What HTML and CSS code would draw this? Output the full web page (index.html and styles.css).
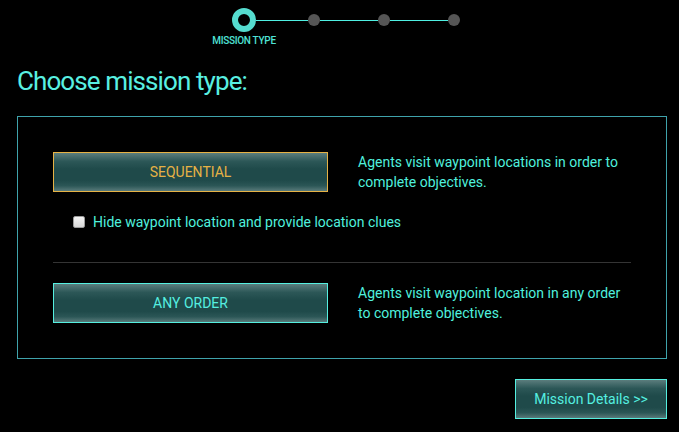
FILE: index.html
```html
<!DOCTYPE html>
<html lang="en">
<head>
<meta charset="utf-8">
<title>Choose mission type</title>
<link rel="stylesheet" href="styles.css">
</head>
<body>
<div class="page">
  <div class="stepper">
    <div class="step step-active">
      <span class="step-label">MISSION TYPE</span>
    </div>
    <div class="connector connector-first"></div>
    <div class="step step-dot"></div>
    <div class="connector"></div>
    <div class="step step-dot"></div>
    <div class="connector"></div>
    <div class="step step-dot"></div>
  </div>

  <h1 class="title">Choose mission type:</h1>

  <div class="panel">
    <div class="option">
      <button class="type-btn type-btn-selected">SEQUENTIAL</button>
      <p class="desc">Agents visit waypoint locations in order to<br>complete objectives.</p>
    </div>
    <label class="check-row">
      <span class="checkbox"></span>
      <span class="check-text">Hide waypoint location and provide location clues</span>
    </label>
    <div class="separator"></div>
    <div class="option">
      <button class="type-btn">ANY ORDER</button>
      <p class="desc">Agents visit waypoint location in any order<br>to complete objectives.</p>
    </div>
  </div>

  <div class="actions">
    <button class="type-btn next-btn">Mission Details &gt;&gt;</button>
  </div>
</div>
</body>
</html>
```

FILE: styles.css
```css
html, body {
  margin: 0;
  padding: 0;
  background: #000;
}

body {
  font-family: Roboto, "Liberation Sans", sans-serif;
  color: #59f0e2;
  width: 679px;
  height: 432px;
  overflow: hidden;
}

.page {
  padding: 0 12px 0 17px;
}

.stepper {
  display: flex;
  align-items: flex-start;
  padding-top: 8px;
  margin-left: 215px;
  height: 24px;
}

.step {
  position: relative;
  box-sizing: border-box;
  border-radius: 50%;
  flex: none;
}

.step-active {
  width: 24px;
  height: 24px;
  border: 6px solid #55dccf;
}

.step-dot {
  width: 12px;
  height: 12px;
  margin-top: 6px;
  background: #555555;
}

.connector {
  width: 58px;
  height: 1px;
  margin-top: 12px;
  background: #4ff0e2;
}

.connector-first {
  width: 52px;
}

.step-label {
  position: absolute;
  top: 21px;
  left: 50%;
  transform: translateX(-50%);
  white-space: nowrap;
  font-size: 10px;
  font-weight: 500;
  letter-spacing: -0.3px;
  color: #4fe3d6;
}

.title {
  margin: 34px 0 0 0;
  font-size: 26px;
  line-height: 30px;
  font-weight: 400;
  letter-spacing: -0.9px;
  color: #59f0e2;
}

.panel {
  margin-top: 20px;
  border: 1px solid #3fa3ab;
  padding: 35px 35px 35px 35px;
}

.option {
  display: flex;
  align-items: flex-start;
  gap: 30px;
}

.type-btn {
  box-sizing: border-box;
  width: 275px;
  height: 40px;
  flex: none;
  border: 1px solid #55efe0;
  background: linear-gradient(to bottom, #5b7d7d 0%, #2c5757 22%, #1f4a4a 42%, #1f4a4a 72%, #2b5656 86%, #587a7a 100%);
  color: #55efe0;
  font-family: Roboto, "Liberation Sans", sans-serif;
  font-size: 14px;
  padding: 0;
  cursor: pointer;
}

.type-btn-selected {
  border-color: #e6b245;
  color: #e6b245;
}

.desc {
  margin: 0;
  font-size: 14px;
  line-height: 20px;
  color: #4ff0de;
}

.check-row {
  display: flex;
  align-items: center;
  height: 20px;
  margin-top: 20px;
  padding-left: 20px;
  gap: 8px;
}

.checkbox {
  box-sizing: border-box;
  width: 12px;
  height: 12px;
  border-radius: 2px;
  border: 1px solid #9a9a9a;
  background: linear-gradient(#f4f4f4, #d8d8d8);
}

.check-text {
  font-size: 14px;
  color: #4ff0de;
}

.separator {
  height: 1px;
  background: #343434;
  margin: 30px 0 20px 0;
}

.actions {
  display: flex;
  justify-content: flex-end;
  margin-top: 20px;
}

.next-btn {
  width: 152px;
}
```
